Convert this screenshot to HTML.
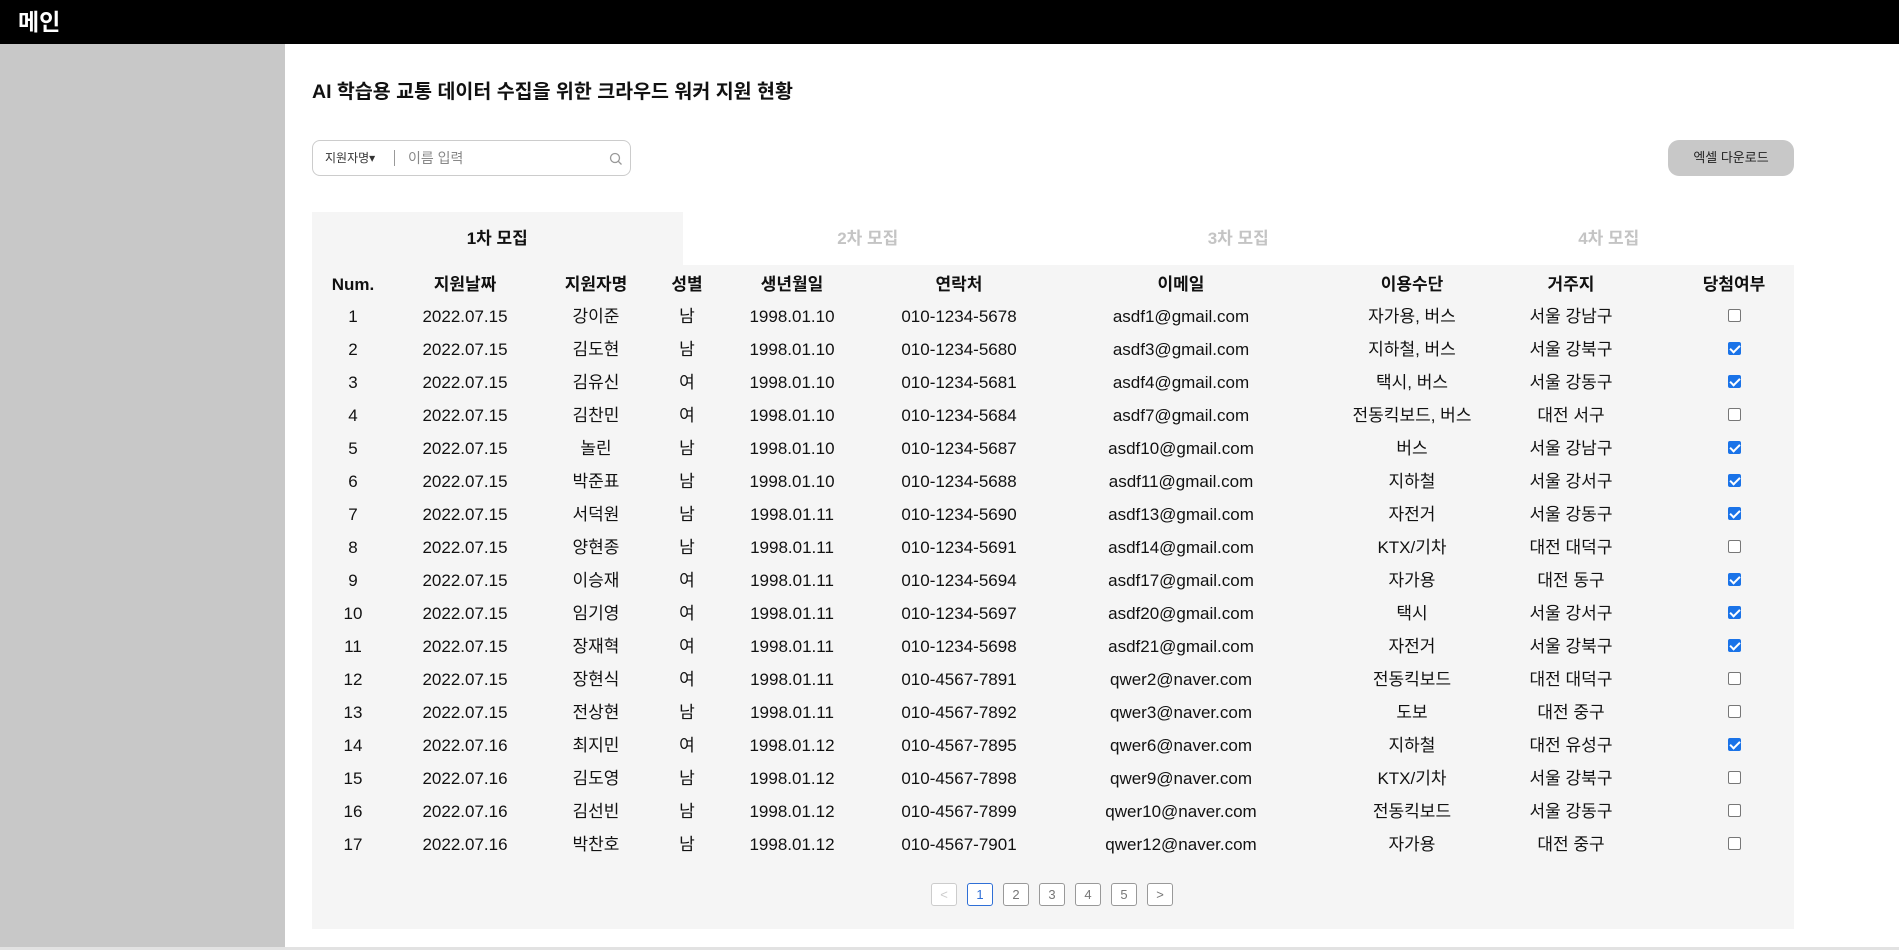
<!DOCTYPE html>
<html><head><meta charset="utf-8">
<style>
*{box-sizing:border-box;margin:0;padding:0}
body{width:1899px;height:950px;overflow:hidden;background:#fff;font-family:"Liberation Sans","Noto Sans CJK KR",sans-serif;color:#111;position:relative}
.hdr{position:absolute;left:0;top:0;width:1899px;height:44px;background:#000;color:#fff;font-weight:bold;font-size:23px;line-height:44px;padding-left:18px}
.side{position:absolute;left:0;top:44px;width:285px;height:906px;background:#c8c8c8}
.title{position:absolute;left:312px;top:79px;font-size:19.5px;font-weight:bold;line-height:26px;white-space:nowrap}
.search{position:absolute;left:312px;top:140px;width:319px;height:36px;border:1px solid #ccc;border-radius:8px;background:#fff}
.search .sel{position:absolute;left:12px;top:0;line-height:34px;font-size:12px;color:#333}
.search .sep{position:absolute;left:81px;top:9px;width:1px;height:16px;background:#999}
.search .ph{position:absolute;left:95px;top:0;line-height:34px;font-size:14px;color:#888}
.search svg{position:absolute;left:296px;top:11px}
.btn{position:absolute;left:1668px;top:140px;width:126px;height:36px;border-radius:11px;background:#c8c8c8;font-size:13px;line-height:36px;text-align:center;color:#222}
.tab{position:absolute;top:212px;height:54px;width:370.5px;text-align:center;line-height:54px;font-size:17px;font-weight:bold;color:#c4c4c4}
.tab.a{background:#f5f5f5;color:#111}
.area{position:absolute;left:312px;top:265px;width:1482px;height:664px;background:#f5f5f5}
.r{position:absolute;left:0;width:1899px;height:33px;line-height:33px;font-size:17px}
.r span{position:absolute;width:240px;text-align:center;white-space:nowrap}
.h{font-weight:bold}
.cb{display:inline-block;width:13px;height:13px;border:1px solid #777;border-radius:2px;background:#fff;vertical-align:middle;position:relative;top:-2px}
.cb.on{background:#1a73e8;border-color:#1a73e8}
.cb.on:after{content:"";position:absolute;left:3px;top:0px;width:4px;height:8px;border:solid #fff;border-width:0 2px 2px 0;transform:rotate(45deg)}
.pg{position:absolute;top:883px;width:26px;height:23px;border:1px solid #999;border-radius:3px;font-size:13px;line-height:21px;text-align:center;color:#777;background:#fff}
.bar{position:absolute;left:0;top:947px;width:1899px;height:3px;background:#e2e2e2}
</style></head><body>
<div class="hdr">메인</div>
<div class="side"></div>
<div class="title">AI 학습용 교통 데이터 수집을 위한 크라우드 워커 지원 현황</div>
<div class="search"><span class="sel">지원자명▾</span><span class="sep"></span><span class="ph">이름 입력</span>
<svg width="14" height="14" viewBox="0 0 14 14"><circle cx="6" cy="6" r="4.5" fill="none" stroke="#999" stroke-width="1.3"/><line x1="9.3" y1="9.3" x2="12.5" y2="12.5" stroke="#999" stroke-width="1.3"/></svg></div>
<div class="btn">엑셀 다운로드</div>
<div class="area"></div>
<div class="tab a" style="left:312px">1차 모집</div>
<div class="tab" style="left:682.5px">2차 모집</div>
<div class="tab" style="left:1053px">3차 모집</div>
<div class="tab" style="left:1423.5px">4차 모집</div>
<div id="rows"></div>
<div class="pg" style="left:931px;color:#ccc;border-color:#ccc">&lt;</div>
<div class="pg" style="left:967px;border-color:#2f6fd6;color:#2f6fd6">1</div>
<div class="pg" style="left:1003px">2</div>
<div class="pg" style="left:1039px">3</div>
<div class="pg" style="left:1075px">4</div>
<div class="pg" style="left:1111px">5</div>
<div class="pg" style="left:1147px">&gt;</div>
<div class="bar"></div>
<script>
var cx=[353,465,596,687,792,959,1181,1412,1571,1734];
var H=["Num.","지원날짜","지원자명","성별","생년월일","연락처","이메일","이용수단","거주지","당첨여부"];
var D=[
["1","2022.07.15","강이준","남","1998.01.10","010-1234-5678","asdf1@gmail.com","자가용, 버스","서울 강남구",0],
["2","2022.07.15","김도현","남","1998.01.10","010-1234-5680","asdf3@gmail.com","지하철, 버스","서울 강북구",1],
["3","2022.07.15","김유신","여","1998.01.10","010-1234-5681","asdf4@gmail.com","택시, 버스","서울 강동구",1],
["4","2022.07.15","김찬민","여","1998.01.10","010-1234-5684","asdf7@gmail.com","전동킥보드, 버스","대전 서구",0],
["5","2022.07.15","놀린","남","1998.01.10","010-1234-5687","asdf10@gmail.com","버스","서울 강남구",1],
["6","2022.07.15","박준표","남","1998.01.10","010-1234-5688","asdf11@gmail.com","지하철","서울 강서구",1],
["7","2022.07.15","서덕원","남","1998.01.11","010-1234-5690","asdf13@gmail.com","자전거","서울 강동구",1],
["8","2022.07.15","양현종","남","1998.01.11","010-1234-5691","asdf14@gmail.com","KTX/기차","대전 대덕구",0],
["9","2022.07.15","이승재","여","1998.01.11","010-1234-5694","asdf17@gmail.com","자가용","대전 동구",1],
["10","2022.07.15","임기영","여","1998.01.11","010-1234-5697","asdf20@gmail.com","택시","서울 강서구",1],
["11","2022.07.15","장재혁","여","1998.01.11","010-1234-5698","asdf21@gmail.com","자전거","서울 강북구",1],
["12","2022.07.15","장현식","여","1998.01.11","010-4567-7891","qwer2@naver.com","전동킥보드","대전 대덕구",0],
["13","2022.07.15","전상현","남","1998.01.11","010-4567-7892","qwer3@naver.com","도보","대전 중구",0],
["14","2022.07.16","최지민","여","1998.01.12","010-4567-7895","qwer6@naver.com","지하철","대전 유성구",1],
["15","2022.07.16","김도영","남","1998.01.12","010-4567-7898","qwer9@naver.com","KTX/기차","서울 강북구",0],
["16","2022.07.16","김선빈","남","1998.01.12","010-4567-7899","qwer10@naver.com","전동킥보드","서울 강동구",0],
["17","2022.07.16","박찬호","남","1998.01.12","010-4567-7901","qwer12@naver.com","자가용","대전 중구",0]];
var s='<div class="r h" style="top:268px">';
H.forEach(function(t,i){s+='<span style="left:'+(cx[i]-120)+'px">'+t+'</span>'});
s+='</div>';
D.forEach(function(r,j){s+='<div class="r" style="top:'+(300+j*33)+'px">';
for(var i=0;i<9;i++)s+='<span style="left:'+(cx[i]-120)+'px">'+r[i]+'</span>';
s+='<span style="left:'+(cx[9]-120)+'px"><i class="cb'+(r[9]?' on':'')+'"></i></span></div>';});
document.getElementById('rows').innerHTML=s;
</script>
</body></html>
